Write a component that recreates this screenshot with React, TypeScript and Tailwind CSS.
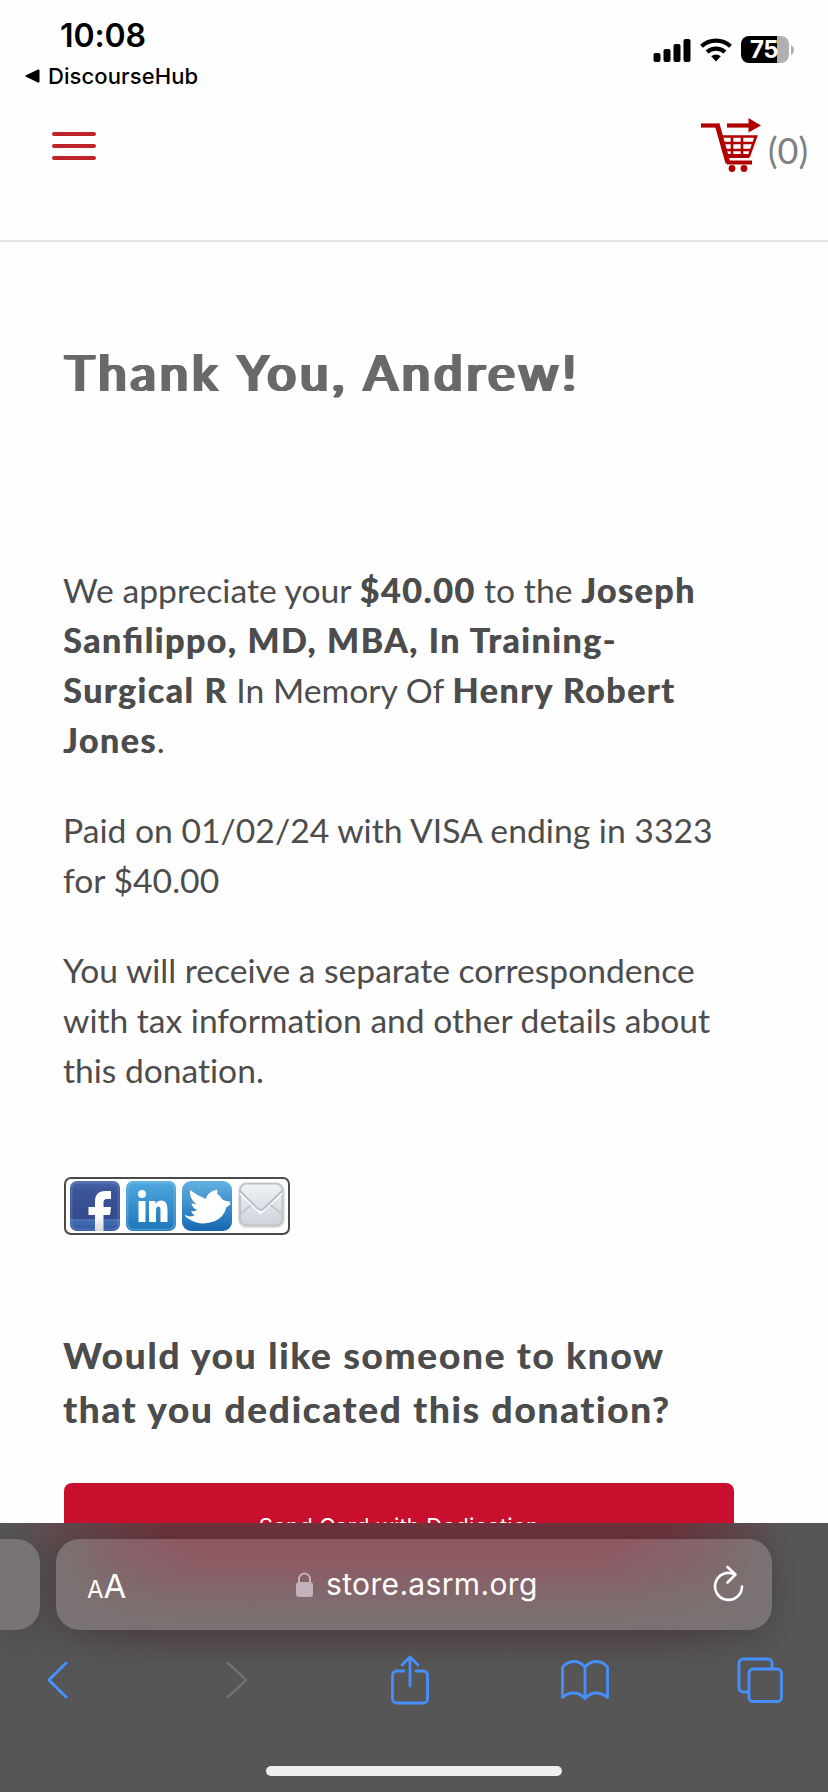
import type { ReactNode } from "react";

function Line({ children, className = "" }: { children: ReactNode; className?: string }) {
  return <span className={`-ml-px block w-max whitespace-nowrap ${className}`}>{children}</span>;
}

function Strong({ children }: { children: ReactNode }) {
  return <b className="font-bold tracking-[1.72px] [text-shadow:0.8px_0_0_#4c4c4c]">{children}</b>;
}

function StatusBar() {
  return (
    <div className="flex h-[100px] shrink-0 justify-between font-['Inter',sans-serif] text-black">
      <div className="pl-[25px] pt-[16px]">
        <div className="pl-[35px] text-[32px] font-semibold leading-[40px] tracking-[-0.1px]">10:08</div>
        <div className="mt-[6px] flex h-[28px] items-center gap-[8px] text-[22px] font-medium leading-[28px] tracking-[0.1px]">
          <svg width="15" height="14" viewBox="0 0 15 14"><path d="M1 6.2 13 .5q1.500-.5 1.500 1v11q0 1.500-1.500 1L1 7.800Q-.3 7 1 6.200Z" /></svg>
          <span>DiscourseHub</span>
        </div>
      </div>
      <div className="mt-[36px] flex h-[27px] items-center pr-[33px]">
        <svg width="38" height="24" viewBox="0 0 38 24">
          <rect x="0.500" y="15" width="7" height="9" rx="2" />
          <rect x="10.500" y="11" width="7" height="13" rx="2" />
          <rect x="20.500" y="6" width="7" height="18" rx="2" />
          <rect x="30.500" y="1" width="7" height="23" rx="2" />
        </svg>
        <svg className="ml-[9px]" width="32" height="24" viewBox="0 0 32 24" fill="none" stroke="#000" strokeWidth="4.200">
          <path d="M1.500 8.300a21.500 21.500 0 0 1 29 0M7 14a13.500 13.500 0 0 1 18 0" />
          <path d="M11.200 18.300a7.500 7.500 0 0 1 9.600 0L16 23.500Z" fill="#000" stroke="none" />
        </svg>
        <div className="ml-[9px] flex h-[27px] w-[48px] items-center justify-center rounded-[8px] bg-[linear-gradient(90deg,#000_75%,#b0b0b0_75%)] text-[24px] font-bold leading-[27px] tracking-[-0.5px] text-white">
          <span className="pr-[2px]">75</span>
        </div>
        <svg className="ml-[2px]" width="4" height="10" viewBox="0 0 4 10"><path d="M0 0q3 1.500 3 5t-3 5Z" fill="#b0b0b0" /></svg>
      </div>
    </div>
  );
}

function CartIcon() {
  return (
    <svg width="60" height="54" viewBox="0 0 60 54" fill="none" stroke="#b00000">
      <path d="M0 7.500H18" strokeWidth="4.200" />
      <path d="M16 6 27 45" strokeWidth="5" />
      <path d="M26 7.500H50" strokeWidth="4.200" />
      <path d="M47.500 0 60 7.500 47.500 14.500Z" fill="#b00000" stroke="none" />
      <path d="M20 18.500H55L48 38H26M22 25H52M24 32H50M31 18V38M41 18V38" strokeWidth="2.600" />
      <path d="M26 38H48M26 44.500H51" strokeWidth="4" />
      <circle cx="31" cy="50.500" r="3.400" fill="#b00000" stroke="none" />
      <circle cx="43" cy="50.500" r="3.400" fill="#b00000" stroke="none" />
    </svg>
  );
}

function SocialLinks() {
  return (
    <div className="flex h-[58px] w-[226px] gap-[6px] rounded-[7px] border-2 border-[#4a4a4a] pl-[4px] pt-[2px]">
      <svg width="50" height="50" viewBox="0 0 50 50">
        <defs>
          <linearGradient id="fb" x2="0" y2="1"><stop stopColor="#4a66a8" /><stop offset=".2" stopColor="#3b5599" /><stop offset=".75" stopColor="#344b8c" /><stop offset=".77" stopColor="#4770b8" /><stop offset="1" stopColor="#2f559f" /></linearGradient>
          <linearGradient id="fl" x2="0" y2="1"><stop stopColor="#fff" /><stop offset=".6" stopColor="#fff" /><stop offset="1" stopColor="#d8d8d8" /></linearGradient>
        </defs>
        <rect width="50" height="50" rx="7" fill="url(#fb)" />
        <rect x="1.500" y="1.500" width="47" height="47" rx="6" fill="none" stroke="#8ba0cf" strokeOpacity=".3" strokeWidth="2" />
        <path d="M25 50V34H18.500V26H25V21C25 13.500 28.500 10 35 10H41V18H37C34.500 18 33.500 19 33.500 21.500V26H41L40 34H33.500V50Z" fill="url(#fl)" />
      </svg>
      <svg width="50" height="50" viewBox="0 0 50 50">
        <defs><linearGradient id="li" x2="0" y2="1"><stop stopColor="#4fa9de" /><stop offset="1" stopColor="#1c75b9" /></linearGradient></defs>
        <rect width="50" height="50" rx="7" fill="url(#li)" />
        <rect x="1.500" y="1.500" width="47" height="47" rx="6" fill="none" stroke="#9bd0ee" strokeOpacity=".3" strokeWidth="2" />
        <circle cx="16" cy="13" r="4" fill="#fff" />
        <path d="M12.500 20H19.500V41H12.500ZM23 20H29.500V23Q31.500 19.500 35 19.500Q41.500 19.500 41.500 28V41H34.500V29.500Q34.500 25.500 32.500 25.500Q30 25.500 30 29.500V41H23Z" fill="#fff" />
      </svg>
      <svg width="50" height="50" viewBox="0 0 50 50">
        <defs><linearGradient id="tw" x2="0" y2="1"><stop stopColor="#62b1e2" /><stop offset="1" stopColor="#1768b3" /></linearGradient></defs>
        <rect width="50" height="50" rx="9" fill="url(#tw)" />
        <path d="M8 9Q16 15 24 18Q25 11 35 8.500Q36 11 35 13Q38 14 40 18Q42 20 48.500 20.500Q46.500 22.500 49 23Q47 24.500 44.500 26Q42 36 33 40Q19 46 6 37.500Q3 35.500 2.500 33.500Q8 37 13 34Q10 33 9 30Q12 31 15 29Q10 27 9.500 22Q12 23.500 14 23Q7 17 8 9Z" fill="#fff" />
      </svg>
      <svg width="48" height="50" viewBox="0 0 48 50">
        <defs><linearGradient id="ml" x2="0" y2="1"><stop stopColor="#eff3f6" /><stop offset="1" stopColor="#ccd3da" /></linearGradient></defs>
        <rect x="0" y="2" width="47" height="45" rx="8" fill="#e3e3e3" />
        <rect x="2" y="2.500" width="42.500" height="42" rx="6.500" fill="url(#ml)" stroke="#bfc3c7" strokeWidth="2" />
        <path d="M2 33 16 22M44 33 30 22" stroke="#c0c8cf" strokeWidth="1.800" />
        <path d="M2 10 22.500 30 44 10" fill="none" stroke="#fff" strokeWidth="3" transform="translate(0 1.500)" />
        <path d="M2 10 19 27Q22.500 31 26.500 27L44 10" fill="none" stroke="#b5bdc4" strokeWidth="1.800" />
      </svg>
    </div>
  );
}

function BrowserBar() {
  return (
    <footer className="flex h-[269px] shrink-0 flex-col overflow-hidden bg-[#565656] bg-[linear-gradient(90deg,#565656_0%,rgba(86,86,86,0.5)_10%,transparent_20%,transparent_80%,rgba(86,86,86,0.5)_88%,#565656_95%),linear-gradient(180deg,#6e333c_0px,#6a343c_16px,#534a4b_112px,#565656_150px)] font-['Inter',sans-serif]">
      <div className="mt-[16px] flex h-[91px] shrink-0 gap-[16px]">
        <div className="w-[40px] rounded-r-[24px] bg-[#787474] shadow-[0_4px_28px_rgba(0,0,0,0.14)]" />
        <div className="flex w-[716px] items-center rounded-[24px] bg-[linear-gradient(90deg,#797373_0%,rgba(121,115,115,0.4)_9%,transparent_20%,transparent_76%,rgba(121,115,115,0.5)_90%,#797373_100%),linear-gradient(180deg,#905560_0%,#8b5c64_30%,#806a6d_65%,#797272_100%)] text-white shadow-[0_4px_28px_rgba(0,0,0,0.16)]">
          <div className="flex w-[70px] items-baseline pl-[31px] pt-[3px]">
            <span className="text-[24px] leading-none">A</span>
            <span className="text-[33px] leading-none">A</span>
          </div>
          <svg className="ml-[170px]" width="17" height="25" viewBox="0 0 17 25">
            <rect y="10" width="17" height="15" rx="3" fill="#c2b2bc" />
            <path d="M3 12V7a5.500 5.500 0 0 1 11 0v5" fill="none" stroke="#c2b2bc" strokeWidth="2" />
          </svg>
          <span className="ml-[13px] w-[215px] whitespace-nowrap pb-[2px] text-[30px] leading-[36px] tracking-[0.35px]">store.asrm.org</span>
          <svg className="ml-[172px] mt-[-2px]" width="32" height="38" viewBox="0 0 32 38" fill="none" stroke="#fff" strokeWidth="2.600" strokeLinecap="round" strokeLinejoin="round">
            <path d="M29 21.500a13.500 13.500 0 1 1-7.500-12.200" />
            <path d="m14.500 2 8 7.500-8 8" />
          </svg>
        </div>
        <div className="w-[40px]" />
      </div>
      <nav className="flex h-[100px] shrink-0 items-center pl-[46px] text-[#468ffd]">
        <svg width="22" height="38" viewBox="0 0 22 38" fill="none" stroke="currentColor" strokeWidth="3" strokeLinecap="round" strokeLinejoin="round"><path d="M20 2 3 19l17 17" /></svg>
        <svg className="ml-[158px]" width="22" height="38" viewBox="0 0 22 38" fill="none" stroke="#707070" strokeWidth="2.500" strokeLinecap="round" strokeLinejoin="round"><path d="m2 2 18 17L2 36" /></svg>
        <svg className="ml-[143px]" width="38" height="50" viewBox="0 0 38 50" fill="none" stroke="currentColor" strokeWidth="2.800" strokeLinecap="round" strokeLinejoin="round"><path d="M13 16H5.500a4 4 0 0 0-4 4v24a4 4 0 0 0 4 4h27a4 4 0 0 0 4-4V20a4 4 0 0 0-4-4H25M19 31V2M11 10l8-8 8 8" /></svg>
        <svg className="ml-[132px]" width="48" height="42" viewBox="0 0 48 42" fill="none" stroke="currentColor" strokeWidth="2.800" strokeLinejoin="round"><path d="M24 8Q19 2.500 13 2.500T1.500 8V38.500Q6 34 12.500 34T24 39.500Q29 34 35 34t11.500 4.500V8Q42 2.500 35.500 2.500T24 8ZM24 8V39" /></svg>
        <svg className="ml-[128px]" width="46" height="46" viewBox="0 0 46 46" fill="none" stroke="currentColor" strokeWidth="2.800"><rect x="12" y="12" width="32.500" height="32.500" rx="4" /><path d="M12 35H6a4 4 0 0 1-4-4V6a4 4 0 0 1 4-4h25a4 4 0 0 1 4 4v6" /></svg>
      </nav>
      <div className="mt-[36px] h-[10px] w-[296px] shrink-0 self-center rounded-full bg-[#eeeeee]" />
    </footer>
  );
}

export default function App() {
  return (
    <div className="flex h-[1792px] w-[828px] flex-col overflow-hidden bg-[#fefefe] font-['Lato',sans-serif] text-[#4c4c4c]">
      <div className="flex h-[1523px] shrink-0 flex-col overflow-hidden">
        <StatusBar />
        <header className="flex h-[142px] shrink-0 justify-between border-b-2 border-[#e3e3e3]">
          <div className="ml-[52px] mt-[32px] flex flex-col gap-[8px]">
            <div className="h-[4px] w-[44px] rounded-full bg-[#bd2328]" />
            <div className="h-[4px] w-[44px] rounded-full bg-[#bd2328]" />
            <div className="h-[4px] w-[44px] rounded-full bg-[#bd2328]" />
          </div>
          <div className="mr-[20px] mt-[18px] flex h-[54px] gap-[7px]">
            <CartIcon />
            <span className="pt-[10px] text-[36px] leading-[44px] text-[#808080]">(0)</span>
          </div>
        </header>
        <main className="flex w-[734px] flex-col pl-[64px] [font-variant-ligatures:no-common-ligatures]">
          <h1 className="mt-[100px] h-[60px] text-[50px] font-normal leading-[60px] tracking-[4.400px] text-[#696969] [text-shadow:1px_0_0_#696969,2px_0_0_#696969,3px_0_0_#696969,4px_0_0_#696969]"><Line>Thank You, Andrew!</Line></h1>
          <p className="mt-[163px] text-[33.7px] leading-[50px]">
            <Line>We appreciate your <Strong>$40.00</Strong> to the <Strong>Joseph</Strong></Line>
            <Line><Strong>San<span className="[font-feature-settings:'liga'_1]">fi</span>lippo, MD, MBA, In Training-</Strong></Line>
            <Line><Strong>Surgical R</Strong> In Memory Of <Strong>Henry Robert</Strong></Line>
            <Line><Strong>Jones</Strong>.</Line>
          </p>
          <p className="mt-[40px] text-[33.7px] leading-[50px]">
            <Line>Paid on 01/02/24 with VISA ending in 3323</Line>
            <Line>for $40.00</Line>
          </p>
          <p className="mt-[40px] text-[33.6px] leading-[50px]">
            <Line>You will receive a separate correspondence</Line>
            <Line>with tax information and other details about</Line>
            <Line>this donation.</Line>
          </p>
          <div className="mt-[82px]"><SocialLinks /></div>
          <h2 className="mt-[93px] text-[37px] font-bold leading-[54px] tracking-[1.800px] [text-shadow:0.5px_0_0_#4c4c4c]">
            <Line>Would you like someone to know</Line>
            <Line>that you dedicated this donation?</Line>
          </h2>
          <button className="mt-[47px] h-[86px] w-[670px] shrink-0 rounded-[8px] bg-[#c8102e] text-center font-['Inter',sans-serif] text-[22px] leading-[86px] tracking-[0.15px] text-white">Send Card with Dedication</button>
        </main>
      </div>
      <BrowserBar />
    </div>
  );
}
